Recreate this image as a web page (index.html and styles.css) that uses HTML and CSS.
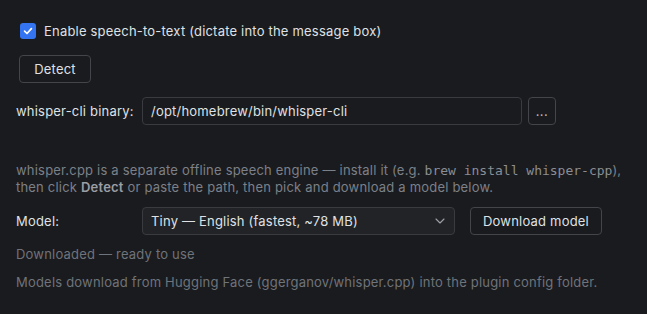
FILE: index.html
```html
<!DOCTYPE html>
<html>
<head>
  <title>Speech to text settings</title>
  <link rel="stylesheet" href="styles.css">
</head>
<body>
  <div class="panel">
    <label class="check-row">
      <span class="checkbox">
        <svg width="10" height="10" viewBox="0 0 10 10"><path d="M1.6 5.2 L4 7.5 L8.4 2.6" fill="none" stroke="#fff" stroke-width="1.7" stroke-linecap="round" stroke-linejoin="round"/></svg>
      </span>
      <span>Enable speech-to-text (dictate into the message box)</span>
    </label>

    <div class="detect-row">
      <button class="btn">Detect</button>
    </div>

    <div class="form-row binary-row">
      <span class="label">whisper-cli binary:</span>
      <div class="field">/opt/homebrew/bin/whisper-cli</div>
      <button class="btn browse">...</button>
    </div>

    <p class="hint">
      whisper.cpp is a separate offline speech engine — install it (e.g. <code>brew install whisper-cpp</code>),<br>
      then click <b>Detect</b> or paste the path, then pick and download a model below.
    </p>

    <div class="form-row model-row">
      <span class="label">Model:</span>
      <div class="select">
        <span>Tiny — English (fastest, ~78 MB)</span>
        <svg width="10" height="6" viewBox="0 0 10 6"><path d="M1 1 L5 5 L9 1" fill="none" stroke="#9da0a8" stroke-width="1.1" stroke-linecap="round" stroke-linejoin="round"/></svg>
      </div>
      <button class="btn download">Download model</button>
    </div>

    <p class="status">Downloaded — ready to use</p>
    <p class="note">Models download from Hugging Face (ggerganov/whisper.cpp) into the plugin config folder.</p>
  </div>
</body>
</html>
```

FILE: styles.css
```css
body {
  margin: 0;
  background-color: #1a1b1e;
  color: #dfe1e5;
  font-family: Inter, "Noto Sans", sans-serif;
  font-size: 13px;
  letter-spacing: 0.2px;
}

.panel {
  padding: 23px 16px 0 16px;
  display: flex;
  flex-direction: column;
}

.check-row {
  display: flex;
  align-items: center;
  gap: 8px;
  margin-left: 4px;
  height: 16px;
}

.checkbox {
  width: 16px;
  height: 16px;
  border-radius: 3px;
  background-color: #3574f0;
  display: flex;
  align-items: center;
  justify-content: center;
}

.detect-row {
  margin-top: 16px;
  margin-left: 3px;
}

.btn {
  font-family: inherit;
  font-size: 13px;
  letter-spacing: 0.2px;
  color: #dfe1e5;
  background-color: #1a1b1e;
  border: 1px solid #43454a;
  border-radius: 4px;
  height: 28px;
  padding: 0 14px;
  box-sizing: border-box;
}

.detect-row .btn {
  width: 72px;
}

.form-row {
  display: flex;
  align-items: center;
  height: 28px;
}

.binary-row {
  margin-top: 14px;
}

.label {
  width: 126px;
}

.field {
  width: 380px;
  height: 28px;
  box-sizing: border-box;
  border: 1px solid #393b40;
  border-radius: 4px;
  padding: 0 8px;
  display: flex;
  align-items: center;
  background-color: #1a1b1e;
}

.browse {
  width: 28px;
  margin-left: 6px;
  padding: 0;
  color: #b4b8bf;
  letter-spacing: 0.5px;
}

.hint {
  margin: 37px 0 0 0;
  line-height: 17px;
  color: #7c8088;
}

.hint code {
  font-family: "DejaVu Sans Mono", monospace;
  font-size: 13px;
  letter-spacing: 0;
  color: #8a8e95;
}

.hint b {
  font-weight: 600;
  color: #9a9ea5;
}

.model-row {
  margin-top: 11px;
}

.select {
  width: 313px;
  height: 28px;
  box-sizing: border-box;
  border: 1px solid #393b40;
  border-radius: 4px;
  background-color: #222327;
  padding: 0 9px 0 8px;
  display: flex;
  align-items: center;
  justify-content: space-between;
}

.download {
  margin-left: 15px;
  width: 132px;
  padding: 0;
}

.status {
  margin: 11px 0 0 0;
  line-height: 17px;
  color: #6f737a;
}

.note {
  margin: 11px 0 0 0;
  line-height: 17px;
  color: #6f737a;
}
```
